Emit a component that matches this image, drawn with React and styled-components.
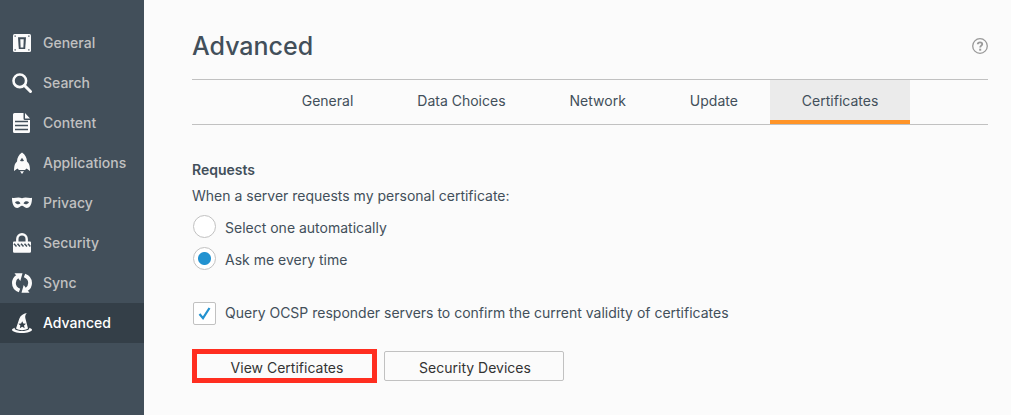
import React, { useState } from "react";
import styled, { createGlobalStyle, css } from "styled-components";

const GlobalStyle = createGlobalStyle`
  *, *::before, *::after { box-sizing: border-box; }
  body {
    margin: 0;
    background: #fbfbfb;
    color: #424f5a;
    font-family: Inter, "Liberation Sans", sans-serif;
    font-size: 14px;
    line-height: 20px;
  }
`;

const Page = styled.div`
  display: flex;
  min-height: 100vh;
`;

const Sidebar = styled.nav`
  flex: none;
  width: 144px;
  padding-top: 23px;
  background: #424f5a;
`;

const CategoryLink = styled.a`
  display: flex;
  align-items: center;
  gap: 11px;
  height: 40px;
  padding-left: 12px;
  color: ${(p) => (p.$active ? "#ffffff" : "#c1c1c1")};
  background: ${(p) => (p.$active ? "#343f48" : "transparent")};
  font-weight: 500;
  text-decoration: none;
`;

const CategoryIcon = styled.svg`
  flex: none;
  width: 20px;
  height: 20px;
  fill: #fbfbfb;
`;

const Main = styled.main`
  flex: 1;
  min-width: 0;
  padding: 28px 23px 32px 48px;
`;

const Header = styled.header`
  display: flex;
  align-items: center;
  justify-content: space-between;
  height: 36px;
`;

const Title = styled.h1`
  margin: 0;
  font-size: 25px;
  line-height: 36px;
  font-weight: 500;
`;

const HelpButton = styled.button`
  display: flex;
  padding: 0;
  border: 0;
  background: none;
`;

const HelpIcon = styled.svg`
  width: 16px;
  height: 16px;
`;

const TabBar = styled.div`
  display: flex;
  justify-content: center;
  height: 46px;
  margin-top: 15px;
  border: solid #c1c1c1;
  border-width: 1px 0;
`;

const Tab = styled.button`
  padding: 2px 32px 0;
  border: solid ${(p) => (p.$active ? "#ff9428" : "transparent")};
  border-width: 0 0 4px;
  background: ${(p) => (p.$active ? "#ebebeb" : "transparent")};
  color: inherit;
  font: inherit;
`;

const Group = styled.fieldset`
  margin: 35px 0 0;
  padding: 0;
  border: 0;
`;

const GroupTitle = styled.legend`
  padding: 0;
  font-weight: 600;
`;

const Description = styled.p`
  margin: 6px 0 8px;
`;

const Option = styled.label`
  display: flex;
  align-items: center;
  gap: 9px;
  height: 24px;
  padding-left: 1px;
  margin-bottom: 8px;
`;

const OptionText = styled.span`
  padding-top: 3px;
`;

const control = css`
  appearance: none;
  flex: none;
  width: 23px;
  height: 23px;
  margin: 0;
  border: 1px solid #c1c1c1;
  background-color: #ffffff;
`;

const Radio = styled.input`
  ${control}
  border-radius: 50%;
  &:checked {
    background-image: radial-gradient(circle, #2292d0 6px, transparent 7px);
  }
`;

const CheckControl = styled.span`
  display: grid;
  flex: none;
`;

const Checkbox = styled.input`
  ${control}
  grid-area: 1 / 1;
  border-radius: 2px;
  &:not(:checked) + svg { visibility: hidden; }
`;

const CheckMark = styled.svg`
  grid-area: 1 / 1;
  width: 23px;
  height: 23px;
  pointer-events: none;
`;

const CheckRow = styled(Option)`
  margin: 23px 0 0;
`;

const Actions = styled.div`
  display: flex;
  align-items: center;
  gap: 7px;
  margin-top: 24px;
`;

const ActionButton = styled.button`
  width: 180px;
  height: 30px;
  padding: 3px 0 0 2px;
  border: 1px solid #c1c1c1;
  border-radius: 2px;
  background: #fbfbfb;
  color: #333333;
  font: inherit;
`;

const HighlightedButton = styled(ActionButton)`
  width: 185px;
  height: 34px;
  padding: 3px 0 0 5px;
  border: 5px solid #ff2e20;
  border-radius: 0;
`;

const icons = {
  General: (
    <>
      <rect x="1" y="1" width="18" height="18" rx="1.500" />
      <path d="M6 4.200h8L13.200 16H6.800z" fill="#424f5a" />
      <path d="M8.300 6.200h3.400L11.400 14.500H8.600z" />
      <path d="M2.500 2.500h1.300v1.300H2.500zM16.200 2.500h1.300v1.300h-1.300zM2.500 16.200h1.300v1.300H2.500zM16.200 16.200h1.300v1.300h-1.300z" fill="#424f5a" />
    </>
  ),
  Search: (
    <>
      <circle cx="7.800" cy="7.800" r="6.300" fill="none" stroke="#fbfbfb" strokeWidth="2.600" />
      <path d="M12.500 12.500l6 6" stroke="#fbfbfb" strokeWidth="3" strokeLinecap="round" />
    </>
  ),
  Content: (
    <>
      <path d="M2.500 0h9v5.500a1.500 1.500 0 0 0 1.500 1.500h5v11.500a1.500 1.500 0 0 1-1.500 1.500h-14A1.500 1.500 0 0 1 1 18.500V1.500A1.500 1.500 0 0 1 2.500 0zM13 0l5 5.500h-5z" />
      <path d="M3 8.500h13M3 12.500h13M3 16.500h13" stroke="#424f5a" strokeWidth="1.300" />
    </>
  ),
  Applications: (
    <>
      <path
        fillRule="evenodd"
        d="M10 -.5c3.300 2.200 4.800 5.300 5 9 2 1.700 3 4 3 9.500L14.500 15.500 13 17H7L5.500 15.500 2 18C2 12.500 3 10.200 5 8.500 5.200 4.800 6.700 1.700 10-.5zM10 4.700l-2 3q2 1 4 0z"
      />
      <path d="M8 18.200h4l-2 2.800z" />
    </>
  ),
  Privacy: (
    <path
      fillRule="evenodd"
      d="M0 4.700c2.800 1.200 5.600-1.200 10 .6 4.400-1.800 7.200.6 10-.6.1 5.500-1.700 10.300-5.300 10.300-2.300 0-3.200-2.200-4.700-2.200S7.600 15 5.300 15C1.700 15-.1 10.200 0 4.700zM3 9.300c1.600 2.600 4.200 2.500 5.500 1C7.500 7.900 4.500 7.700 3 9.300zM17 9.300c-1.500-1.600-4.500-1.400-5.500 1 1.300 1.500 3.900 1.600 5.500-1z"
    />
  ),
  Security: (
    <>
      <path d="M5.300 10V6a4.700 4.700 0 0 1 9.400 0v4" fill="none" stroke="#fbfbfb" strokeWidth="2.400" />
      <path d="M2 8.500h16a1 1 0 0 1 1 1v9a1.300 1.300 0 0 1-1.300 1.300H2.300A1.300 1.300 0 0 1 1 18.500v-9a1 1 0 0 1 1-1z" />
      <path
        d="M2 10.800l2.500 2.700M5.500 10.800l2.500 2.700M9 10.800l2.500 2.700M12.500 10.800l2.500 2.700M16 10.800l2.300 2.700"
        stroke="#424f5a"
        strokeWidth="1.500"
      />
    </>
  ),
  Sync: (
    <>
      <path
        d="M7.500 17.500C3.600 16 1.900 13 1.900 10 1.900 7.300 3.200 5 5.500 3.500M12.500 2.500C16.400 4 18.100 7 18.100 10c0 2.700-1.300 5-3.600 6.500"
        fill="none"
        stroke="#fbfbfb"
        strokeWidth="3.800"
      />
      <path d="M2.500.3h8L8.300 8zM17.500 19.700h-8l2.200-7.700z" />
    </>
  ),
  Advanced: (
    <>
      <path
        fillRule="evenodd"
        d="M14.800 0C11 .8 8.500 2.500 7.300 5.800L4 15.500c3.500 2.300 8.500 2.300 12 0L13.300 5c-.3-1.800 0-3.300 1.500-5zM10.200 8.200l1.100 2.400 2.700.2-2 1.800.7 2.600-2.500-1.400-2.400 1.400.6-2.600-2-1.800 2.700-.2z"
      />
      <path d="M3 14.700l-.4 1.300c4 2.700 10.800 2.700 14.800 0l-.4-1.300c2 .5 3 1.200 3 2.100 0 1.900-4.500 3.200-10 3.200S0 18.700 0 16.800c0-.9 1-1.600 3-2.100z" />
    </>
  ),
};

const tabs = ["General", "Data Choices", "Network", "Update", "Certificates"];

export default function App() {
  const [category, setCategory] = useState("Advanced");
  const [tab, setTab] = useState("Certificates");

  return (
    <>
      <GlobalStyle />
      <Page>
        <Sidebar aria-label="Categories">
          {Object.entries(icons).map(([name, drawing]) => (
            <CategoryLink
              key={name}
              href={`#${name.toLowerCase()}`}
              $active={category === name}
              onClick={() => setCategory(name)}
            >
              <CategoryIcon viewBox="0 0 20 20" overflow="visible" aria-hidden="true">
                {drawing}
              </CategoryIcon>
              {name}
            </CategoryLink>
          ))}
        </Sidebar>
        <Main>
          <Header>
            <Title>Advanced</Title>
            <HelpButton type="button" aria-label="Help">
              <HelpIcon viewBox="0 0 16 16" fill="none" stroke="#999999">
                <circle cx="8" cy="8" r="7.300" strokeWidth="1.300" />
                <path d="M5.800 6.200C5.900 3.700 10.300 3.700 10.200 6.200 10.200 7.600 8.200 7.700 8.200 9.500" strokeWidth="1.900" />
                <path d="M8.200 10.700v2" strokeWidth="2" />
              </HelpIcon>
            </HelpButton>
          </Header>
          <TabBar role="tablist">
            {tabs.map((name) => (
              <Tab
                key={name}
                type="button"
                role="tab"
                aria-selected={tab === name}
                $active={tab === name}
                onClick={() => setTab(name)}
              >
                {name}
              </Tab>
            ))}
          </TabBar>
          <Group>
            <GroupTitle>Requests</GroupTitle>
            <Description>When a server requests my personal certificate:</Description>
            <Option>
              <Radio type="radio" name="certificate" />
              <OptionText>Select one automatically</OptionText>
            </Option>
            <Option>
              <Radio type="radio" name="certificate" defaultChecked />
              <OptionText>Ask me every time</OptionText>
            </Option>
          </Group>
          <CheckRow>
            <CheckControl>
              <Checkbox type="checkbox" defaultChecked />
              <CheckMark viewBox="0 0 23 23" fill="none" stroke="#2292d0" strokeWidth="2.200">
                <path d="M6.500 12l3.500 4.200L16.500 6" />
              </CheckMark>
            </CheckControl>
            <span>Query OCSP responder servers to confirm the current validity of certificates</span>
          </CheckRow>
          <Actions>
            <HighlightedButton type="button">View Certificates</HighlightedButton>
            <ActionButton type="button">Security Devices</ActionButton>
          </Actions>
        </Main>
      </Page>
    </>
  );
}
